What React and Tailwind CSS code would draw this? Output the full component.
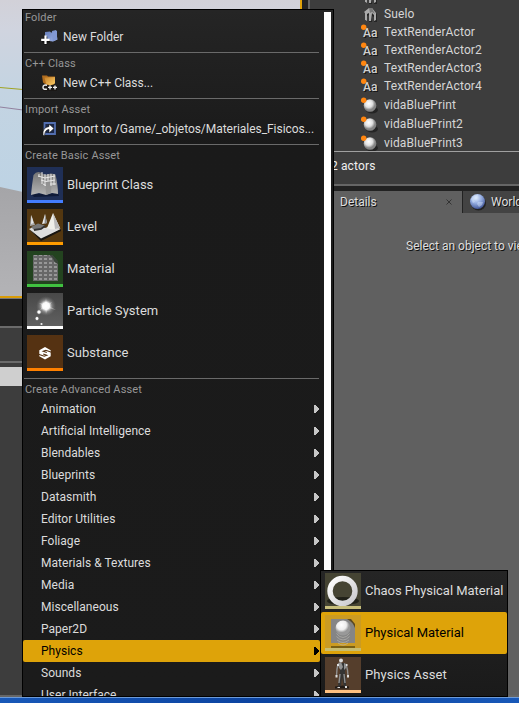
import React from 'react';

const Separator = () => <div className="ml-px mr-[2px] mt-[4px] mb-[3px] h-px bg-[#6a6a6a]" />;

const Heading = ({ children }) => (
  <div className="mb-px h-[15px] pl-[2px] text-[11px] leading-[15px] tracking-[0.15px] text-[#979797]">{children}</div>
);

const FolderIcon = () => (
  <svg width="18" height="18" viewBox="0 0 18 18">
    <defs>
      <linearGradient id="folder" x1="0" y1="0" x2="1" y2="1">
        <stop offset="0" stopColor="#5f78b4" />
        <stop offset="1" stopColor="#a5b9ee" />
      </linearGradient>
    </defs>
    <path d="M5 4 10 3.500l1 1h1V3l4-1 1.500 9.500-4.500 2-8-1z" fill="url(#folder)" />
    <path d="M12 5 17 2.500v9l-4.500 2z" fill="#8198d4" />
    <path d="M5.500 8.500v8M2 12.800h8" stroke="#111" strokeWidth="3.500" />
    <path d="M5.500 7.500v8.500M1.200 11.800h8.600" stroke="#fff" strokeWidth="2.200" />
  </svg>
);

const ClassIcon = () => (
  <svg width="18" height="18" viewBox="0 0 18 18">
    <defs>
      <linearGradient id="amber" x1="0" y1="0" x2="1" y2="1">
        <stop offset="0" stopColor="#c47f28" />
        <stop offset="1" stopColor="#ffd16a" />
      </linearGradient>
    </defs>
    <path d="M2 1.500h5l1 1h7l-1 8-7 1-4-3z" fill="#b06c1e" />
    <path d="m4.500 3.500 10.500-.5v6.500l-5 2-4-2z" fill="url(#amber)" />
    <path d="M3 11h4l3 1 7-1v6H3z" fill="#1a1715" />
    <path d="M7 11.300q-4-1-4 1.900 0 2.800 4 1.900M8 13.400h4M10 11.400v4M13 13.400h4M15 11.400v4" fill="none" stroke="#eee" strokeWidth="1.400" />
  </svg>
);

const ImportIcon = () => (
  <svg width="18" height="18" viewBox="0 0 18 18">
    <path d="M4.500 3h10.500v11H4.500z" fill="#1d2846" stroke="#536fb0" strokeWidth="1.800" />
    <path d="M3 15.500q-1-8 6-9V4l5 4.500L9 13V9.500q-4 0-4.500 6z" fill="#fff" stroke="#111" strokeWidth=".6" />
  </svg>
);

const SmallItem = ({ icon, children, spacing }) => (
  <div className="flex h-[22px] items-center pl-[17px]">
    {icon}
    <span className={`ml-[5px] whitespace-nowrap text-xs text-[#dcdcdc] ${spacing}`}>{children}</span>
  </div>
);

const BlueprintArt = () => (
  <svg width="36" height="36" viewBox="0 0 36 36">
    <defs>
      <linearGradient id="sheet" x1="0" y1="0" x2="0" y2="1">
        <stop offset="0" stopColor="#747474" />
        <stop offset="1" stopColor="#b4b4b4" />
      </linearGradient>
    </defs>
    <path d="M0 0h36v33H0z" fill="#1f2f56" />
    <path d="m4 27 27-1 1 3-25 1z" fill="#101b38" />
    <path d="M6.500 8q3-4 7-2.500l5 2.500 6-1.500 4 1q2.500 11 2.500 19.500l-6-1-6 2-7-2-8 2Q5 17 6.500 8z" fill="url(#sheet)" />
    <path d="m18 8 1 20 5-2q1-9 0-19.500z" fill="#8e8e8e" opacity=".7" />
    <path d="M12 7v3m3-5v12m3-10v12m3-12v7m3-7v12m3-12v11M11 9l7 2 10-2M14 13l5 1.500 9-1.500M16 17l3 1.500M23 17h6" fill="none" stroke="#e8e8e8" strokeWidth="1" />
    <path d="M0 33h36v3H0z" fill="#437dff" />
  </svg>
);

const LevelArt = () => (
  <svg width="36" height="36" viewBox="0 0 36 36">
    <path d="M0 0h36v33H0z" fill="#533710" />
    <path d="m4 6 4 10-5 1z" fill="#aaa" />
    <path d="m4.500 6 2 8-2.500 1z" fill="#e5e5e5" />
    <path d="m2 20 9-4 7 3 6-2 10 3-20 11z" fill="#ddd" />
    <path d="m2 20 12 9.500 20-9.500v2L14 32z" fill="#181510" />
    <path d="m4 18 7-3.500 7 2-3 3.500-8 1z" fill="#777" />
    <path d="m18 5 2 9-5 1z" fill="#eee" />
    <path d="m18 5 2 9-2.500 1z" fill="#8b8b8b" />
    <path d="m26 4 7 15q-6 3-13 0z" fill="#efefe9" />
    <path d="m26 4 7 15-5 1z" fill="#bbb" />
    <path d="m7 21 7-1 4-3" fill="none" stroke="#333" strokeWidth="1.800" />
    <path d="M0 33h36v3H0z" fill="#ff9c00" />
  </svg>
);

const MaterialArt = () => (
  <svg width="36" height="36" viewBox="0 0 36 36">
    <defs>
      <pattern id="weave" x="1" y="2" width="5" height="4" patternUnits="userSpaceOnUse">
        <path d="M0 0h5v4H0z" fill="#676767" />
        <path d="M1 1h3v2H1z" fill="#979797" />
      </pattern>
    </defs>
    <path d="M0 0h36v33H0z" fill="#23431f" />
    <path d="M6 4h19l6 7v19H6z" fill="url(#weave)" />
    <path d="M22 4h3.500L31 10v3q-3-1-4-3-1-4-5-6z" fill="#3a453a" />
    <path d="M0 33h36v3H0z" fill="#40c140" />
  </svg>
);

const ParticleArt = () => (
  <svg width="36" height="36" viewBox="0 0 36 36">
    <defs>
      <radialGradient id="glow">
        <stop offset="0" stopColor="#fff" />
        <stop offset=".35" stopColor="#fff" stopOpacity=".95" />
        <stop offset=".6" stopColor="#ddd" stopOpacity=".35" />
        <stop offset="1" stopColor="#888" stopOpacity="0" />
      </radialGradient>
      <linearGradient id="smoke" x1="0" y1="0" x2="0" y2="1">
        <stop offset="0" stopColor="#484848" />
        <stop offset="1" stopColor="#606060" />
      </linearGradient>
    </defs>
    <path d="M0 0h36v33H0z" fill="url(#smoke)" />
    <circle cx="19" cy="13" r="10" fill="url(#glow)" />
    <path d="m19 5 1 6 5-2-3 4 7 4-8-2-2 6-1-6-5 2 3-4-4-3 6 1z" fill="#fff" opacity=".35" />
    <circle cx="12" cy="19" r="3" fill="url(#glow)" />
    <circle cx="12" cy="19" r="1.500" fill="#fff" />
    <circle cx="10" cy="25.500" r="2.600" fill="url(#glow)" />
    <circle cx="10" cy="25.500" r="1.200" fill="#fff" />
    <circle cx="14.500" cy="31" r="1.100" fill="#eee" />
    <path d="M0 33h36v3H0z" fill="#fff" />
  </svg>
);

const SubstanceArt = () => (
  <svg width="36" height="36" viewBox="0 0 36 36">
    <path d="M0 0h36v33H0z" fill="#553212" />
    <path d="m18 12 5.700 3.200v6L18 24.500l-5.700-3.300v-6z" fill="#fff" />
    <path d="m24.500 17.300-5.700-2-2.500 1 3.500 1.200M11.500 19.200l5.700 2 2.500-1-3.500-1.200" fill="none" stroke="#553212" strokeWidth="1.200" />
    <path d="M0 33h36v3H0z" fill="#ff8000" />
  </svg>
);

const ChaosArt = () => (
  <svg width="36" height="36" viewBox="0 0 36 36">
    <defs>
      <linearGradient id="ring" x1="0" y1="0" x2="1" y2="1">
        <stop offset="0" stopColor="#fff" />
        <stop offset="1" stopColor="#c9c9cc" />
      </linearGradient>
    </defs>
    <path d="M0 0h36v33H0z" fill="#454433" />
    <ellipse cx="18" cy="28" rx="16" ry="4" fill="#202119" />
    <circle cx="17.500" cy="18" r="12.500" fill="none" stroke="url(#ring)" strokeWidth="5.400" />
    <path d="M0 33h36v3H0z" fill="#c7be7c" />
  </svg>
);

const PhysicalArt = () => (
  <svg width="36" height="36" viewBox="0 0 36 36">
    <defs>
      <radialGradient id="ball" cx=".4" cy=".3">
        <stop offset="0" stopColor="#fff" />
        <stop offset=".65" stopColor="#ededed" />
        <stop offset="1" stopColor="#999" />
      </radialGradient>
    </defs>
    <path d="M0 0h36v33H0z" fill="#cb9b22" />
    <path d="M6 31h24v2H6z" fill="#7a6014" />
    <path d="M6 4h18l6 6v18H6z" fill="#858585" />
    <path d="M22 4h4l4 5v4q-2-6-8-9z" fill="#5b4a23" />
    <path d="M11.500 18.500q6.500 8 13 0M11.500 21.500q6.500 7 13 0M12 25q6 5 12 0M13 28q5 4 10 0" fill="none" stroke="#bab9b2" strokeWidth=".9" opacity=".7" />
    <circle cx="18" cy="13" r="7.500" fill="url(#ball)" />
    <path d="M0 33h36v3H0z" fill="#c8bd70" />
  </svg>
);

const AssetArt = () => (
  <svg width="36" height="36" viewBox="0 0 36 36">
    <path d="M0 0h36v33H0z" fill="#553e2c" />
    <path d="M10 31.500h14v-2l-6-1-8 1z" fill="#211a16" />
    <path d="M15 6h5l1 4-1 5 1 6v8l-2 1-2-10-1 9-3 1 1-9 1-5z" fill="#343434" />
    <circle cx="16" cy="3.500" r="2" fill="#ddd" />
    <path d="m13 6 3-1 2 5-2 3-2-2zM19 6l2 1v4l-2 2z" fill="#929292" />
    <path d="m13 7-1 5-.5 7M21 7l1.500 6 .5 6M15 17l-1 9M19 17l1 9" fill="none" stroke="#8f8f8f" strokeWidth="1.400" />
    <path d="M10.500 18h2v2.500h-2zM22 18h2v2.500h-2zM12.500 30h2.500v1h-2.500zM20 29h2v2h-2zM12 7h2v2h-2zM21 7h1.500v2H21z" fill="#ddd" />
    <path d="M0 33h36v3H0z" fill="#ffc080" />
  </svg>
);

const LargeItem = ({ art, children, active, spacing = 'tracking-[0.05px]' }) => (
  <div className={`flex h-[42px] items-center pl-1 ${active ? 'rounded-[2px] bg-[#dea309] text-black' : 'text-[#dcdcdc]'}`}>
    {art}
    <span className={`ml-1 whitespace-nowrap text-[13px] ${spacing}`}>{children}</span>
  </div>
);

const advanced = ['Animation', 'Artificial Intelligence', 'Blendables', 'Blueprints', 'Datasmith', 'Editor Utilities', 'Foliage', 'Materials & Textures', 'Media', 'Miscellaneous', 'Paper2D', 'Physics', 'Sounds', 'User Interface'];

const AdvancedItem = ({ name }) => {
  const active = name === 'Physics';
  return (
    <div className={`mr-px flex h-[22px] items-center justify-between pl-[18px] text-xs ${active ? 'rounded-[2px] bg-[#dea309] text-black' : 'text-[#dcdcdc]'}`}>
      <span className="tracking-[0.03px]">{name}</span>
      <svg className="mr-px" width="5" height="8" viewBox="0 0 5 8" shapeRendering="crispEdges">
        <path d="M0 0h1l4 4-4 4H0z" fill={active ? '#000' : '#c6c6c6'} />
      </svg>
    </div>
  );
};

const HouseIcon = () => (
  <svg width="18" height="18" viewBox="0 0 18 18">
    <path d="m4 8 5-5 7 6v8h-3v-5l-2-1v6H8v-7l-2 1v5H4z" fill="#242424" />
    <path d="m3 7 5-4h3l4 5v7l-2 1v-6l-2-2-1 8H8V8L6 9v7l-2-1V8z" fill="#aaa" />
    <path d="m8 3 1 5 2-1 3 2-3-6z" fill="#777" />
  </svg>
);

const TextIcon = () => (
  <svg width="18" height="18" viewBox="0 0 18 18">
    <text x="3" y="14.500" fontSize="12" fontFamily="Roboto" fontWeight="700" fill="#161616">Aa</text>
    <text x="2" y="13.500" fontSize="12" fontFamily="Roboto" fontWeight="500" fill="#d0d0d0">Aa</text>
    <circle cx="2.700" cy="4.200" r="2.700" fill="#ff8610" />
  </svg>
);

const SphereIcon = () => (
  <svg width="18" height="18" viewBox="0 0 18 18">
    <defs>
      <radialGradient id="pearl" cx=".4" cy=".35">
        <stop offset="0" stopColor="#fff" />
        <stop offset=".6" stopColor="#e0e0e0" />
        <stop offset="1" stopColor="#858585" />
      </radialGradient>
    </defs>
    <ellipse cx="11" cy="14" rx="6" ry="3.500" fill="#242424" />
    <circle cx="9" cy="9.500" r="6.300" fill="url(#pearl)" />
    <circle cx="2.700" cy="4.200" r="2.700" fill="#ff8610" />
  </svg>
);

const GlobeIcon = () => (
  <svg width="18" height="18" viewBox="0 0 18 18">
    <defs>
      <radialGradient id="globe" cx=".4" cy=".25" r=".75">
        <stop offset="0" stopColor="#e3efff" />
        <stop offset=".5" stopColor="#93abdf" />
        <stop offset="1" stopColor="#44599a" />
      </radialGradient>
    </defs>
    <circle cx="9.500" cy="10" r="7.500" fill="#222" />
    <circle cx="8.500" cy="8.500" r="7.500" fill="url(#globe)" />
    <path d="M2 6q3-4 7-4l-1 4-3 1 1 2-2 1zM9 9l5 0-1 3-3 2-2-3z" fill="#d5e4fb" opacity=".45" />
  </svg>
);

const Actor = ({ icon, children, height }) => (
  <div className={`flex shrink-0 items-center pl-[51px] ${height}`}>
    {icon}
    <span className="ml-[5px] text-xs tracking-[0.12px] text-[#d6d6d6]">{children}</span>
  </div>
);

const Viewport = () => (
  <div className="h-[296px] shrink-0 overflow-hidden">
    <svg width="300" height="296" viewBox="0 0 300 296">
      <defs>
        <linearGradient id="sky" x1="0" y1="0" x2="0" y2="1">
          <stop offset="0" stopColor="#d2d1d8" />
          <stop offset=".1" stopColor="#d0d4df" />
          <stop offset=".3" stopColor="#c4d4e2" />
          <stop offset=".65" stopColor="#bdd3e4" />
        </linearGradient>
        <linearGradient id="floor" x1="0" y1="0" x2="0" y2="1">
          <stop offset="0" stopColor="#a5a5a8" />
          <stop offset="1" stopColor="#b3b3b6" />
        </linearGradient>
      </defs>
      <path d="M0 0h300v296H0z" fill="url(#sky)" />
      <path d="m0 187 23 5v104H0z" fill="url(#floor)" />
      <path d="m0 87.500 23 2" stroke="#a0a322" />
      <path d="m0 107 23 3" stroke="#92809e" />
    </svg>
  </div>
);

export default function App() {
  return (
    <div className="relative flex h-[703px] w-[519px] flex-col overflow-hidden bg-[#3d3d3d] font-['Roboto',sans-serif] [&_svg]:shrink-0">
      <div className="flex h-[695px] shrink-0">
        <div className="flex w-[300px] shrink-0 flex-col">
          <Viewport />
          <div className="h-[2px] bg-[#d99c08]" />
          <div className="h-px bg-[#777]" />
          <div className="h-[27px] bg-[#222]" />
          <div className="h-[2px] bg-[#6b6b6b]" />
          <div className="h-[33px] bg-[#3d3d3d]" />
          <div className="h-[2px] bg-[#6b6b6b]" />
          <div className="h-[4px] bg-[#3d3d3d]" />
          <div className="h-[19px] bg-[#cfcfcf]" />
        </div>
        <div className="w-[2px] bg-[#e0a20a]" />
        <div className="w-[6px] bg-[#222]" />
        <div className="w-[2px] bg-[#666]" />
        <div className="flex min-w-0 flex-1 flex-col">
          <div className="flex h-[151px] shrink-0 flex-col overflow-hidden">
            <div className="-mt-[13px] h-[18px] shrink-0 pl-[51px]"><HouseIcon /></div>
            <Actor icon={<HouseIcon />} height="h-[18px]">Suelo</Actor>
            <Actor icon={<TextIcon />} height="h-[18px]">TextRenderActor</Actor>
            <Actor icon={<TextIcon />} height="h-[18px]">TextRenderActor2</Actor>
            <Actor icon={<TextIcon />} height="h-[18px]">TextRenderActor3</Actor>
            <Actor icon={<TextIcon />} height="h-[18px]">TextRenderActor4</Actor>
            <Actor icon={<SphereIcon />} height="h-[19px]">vidaBluePrint</Actor>
            <Actor icon={<SphereIcon />} height="h-[19px]">vidaBluePrint2</Actor>
            <Actor icon={<SphereIcon />} height="h-[19px]">vidaBluePrint3</Actor>
          </div>
          <div className="h-px shrink-0 bg-[#a0a0a0]" />
          <div className="flex h-[32px] shrink-0 items-center pb-[4px] pl-[14px] text-xs tracking-[0.15px] text-[#f0f0f0]">42 actors</div>
          <div className="h-[2px] shrink-0 bg-[#666]" />
          <div className="h-[5px] shrink-0 bg-[#222]" />
          <div className="flex h-[22px] shrink-0 bg-[#606060] text-xs text-[#dedede] [text-shadow:1px_1px_0_#111]">
            <div className="flex w-[152px] shrink-0 items-center justify-between pl-[30px] pr-[10px]">
              <span>Details</span>
              <svg width="6" height="6" viewBox="0 0 6 6"><path d="m.5.500 5 5m0-5-5 5" stroke="#333" /></svg>
            </div>
            <div className="w-px shrink-0 bg-[#222]" />
            <div className="flex flex-1 items-center overflow-hidden bg-[#434343] pl-[6px]">
              <GlobeIcon />
              <span className="ml-1 whitespace-nowrap">World Settings</span>
            </div>
          </div>
          <div className="flex-1 overflow-hidden whitespace-nowrap bg-[#606060] pl-[96px] pt-[24px] text-xs leading-[18px] text-[#dedede] [text-shadow:1px_1px_0_#111]">Select an object to view details.</div>
        </div>
      </div>
      <div className="h-[2px] shrink-0 bg-[#666]" />
      <div className="h-px shrink-0 bg-[#6c9ad8]" />
      <div className="flex-1 bg-linear-to-r from-[#1858b8] via-[#0b43a0] to-[#1858b8]" />

      <div className="absolute left-[22px] top-[9px] flex h-[688px] w-[312px] border border-black bg-linear-to-b from-[#252525] via-[#1a1a1a] via-20% to-[#1b1b1b]">
        <div className="flex w-[298px] shrink-0 flex-col overflow-hidden [&>*]:shrink-0">
          <Heading>Folder</Heading>
          <SmallItem icon={<FolderIcon />} spacing="tracking-[0px]">New Folder</SmallItem>
          <Separator />
          <Heading>C++ Class</Heading>
          <SmallItem icon={<ClassIcon />} spacing="tracking-[-0.02px]">New C++ Class...</SmallItem>
          <Separator />
          <Heading>Import Asset</Heading>
          <SmallItem icon={<ImportIcon />} spacing="tracking-[-0.04px]">Import to /Game/_objetos/Materiales_Fisicos...</SmallItem>
          <Separator />
          <Heading>Create Basic Asset</Heading>
          <LargeItem art={<BlueprintArt />} spacing="tracking-[-0.05px]">Blueprint Class</LargeItem>
          <LargeItem art={<LevelArt />}>Level</LargeItem>
          <LargeItem art={<MaterialArt />}>Material</LargeItem>
          <LargeItem art={<ParticleArt />}>Particle System</LargeItem>
          <LargeItem art={<SubstanceArt />}>Substance</LargeItem>
          <Separator />
          <Heading>Create Advanced Asset</Heading>
          {advanced.map((name) => <AdvancedItem key={name} name={name} />)}
        </div>
        <div className="ml-[3px] mt-[2px] h-[559px] w-[7px] bg-white" />
      </div>

      <div className="absolute left-[320px] top-[570px] flex h-[127px] w-[188px] flex-col border border-black bg-linear-to-b from-[#252525] to-[#1a1a1a]">
        <div className="-mt-px"><LargeItem art={<ChaosArt />} spacing="tracking-[-0.03px]">Chaos Physical Material</LargeItem></div>
        <LargeItem active art={<PhysicalArt />} spacing="tracking-[0px]">Physical Material</LargeItem>
        <LargeItem art={<AssetArt />}>Physics Asset</LargeItem>
      </div>
    </div>
  );
}
